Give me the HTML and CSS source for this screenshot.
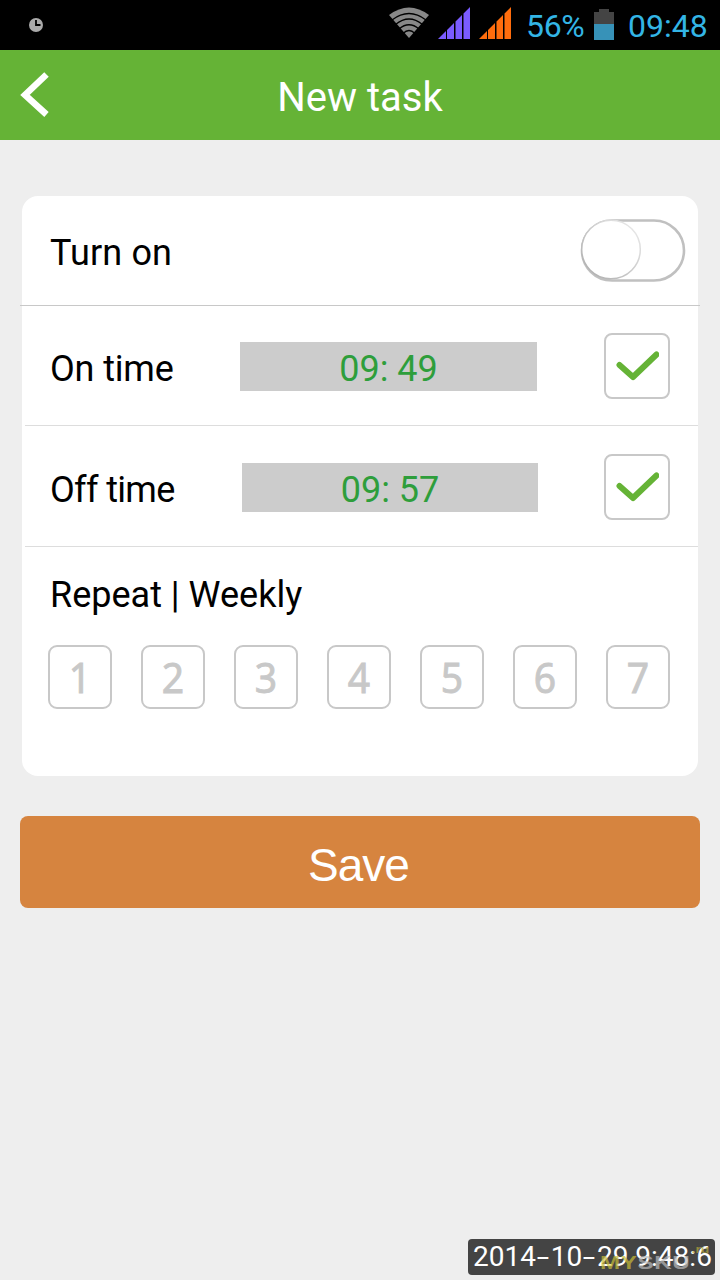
FILE: index.html
```html
<!DOCTYPE html>
<html lang="en">
<head>
<meta charset="utf-8">
<title>New task</title>
<link rel="stylesheet" href="styles.css">
</head>
<body>
<div class="status">
  <svg class="alarm" width="14" height="14" viewBox="0 0 14 14"><circle cx="7" cy="7" r="7" fill="#aaa"/><path d="M7 2v5h4.500" fill="none" stroke="#000" stroke-width="1.800"/></svg>
  <svg class="wifi" width="40" height="32" viewBox="0 0 40 32"><path d="M0 8Q20 -7 40 8L20 31Z" fill="#888"/><path d="M3 13Q20 0 37 13M6.500 17.500Q20 6.500 33.500 17.500M10 22Q20 13.500 30 22M14 26.500Q20 20.500 26 26.500" fill="none" stroke="#000" stroke-width="1.300"/></svg>
  <svg class="signal violet" width="32" height="32" viewBox="0 0 32 32"><path d="M0 32l8-8v8zM9 32v-9l7-7v16zM17.500 32V14.500L24 8v24zM25.500 32V6.500L32 0v32z"/></svg>
  <svg class="signal orange" width="32" height="32" viewBox="0 0 32 32"><path d="M0 32l8-8v8zM9 32v-9l7-7v16zM17.500 32V14.500L24 8v24zM25.500 32V6.500L32 0v32z"/></svg>
  <span class="percent">56%</span>
  <svg class="battery" width="20" height="31" viewBox="0 0 20 31"><path d="M0 3h5V0h10v3h5v12H0z" fill="#444"/><path d="M0 15h20v16H0z" fill="#3792b8"/></svg>
  <span class="clock">09:48</span>
</div>
<header class="header">
  <svg class="back" width="30" height="46" viewBox="0 0 30 46"><path d="M26.500 2.500L5 23L26.500 42.500" fill="none" stroke="#fff" stroke-width="6.500"/></svg>
  <h1 class="title">New task</h1>
</header>
<main class="content">
  <section class="card">
    <div class="row row-switch">
      <span class="label">Turn on</span>
      <svg class="switch" width="106" height="64" viewBox="0 0 106 64"><defs><linearGradient id="knob" x1="0" y1="1" x2="1" y2="0"><stop offset="0" stop-color="#aaa"/><stop offset=".5" stop-color="#ccc"/><stop offset="1" stop-color="#eee"/></linearGradient></defs><rect x="2" y="2.500" width="102" height="60" rx="30" fill="#fff" stroke="#c0c0c0" stroke-width="2.600"/><circle cx="31" cy="31.500" r="29.300" fill="#fff" stroke="url(#knob)" stroke-width="1.500"/></svg>
    </div>
    <div class="row row-on">
      <span class="label">On time</span>
      <span class="time">09: 49</span>
      <span class="check"><svg width="44" height="32" viewBox="0 0 44 32"><path d="M4.500 15L18 27L41.500 4.500" fill="none" stroke="#65b336" stroke-width="6" stroke-linecap="round" stroke-linejoin="round"/></svg></span>
    </div>
    <div class="row row-off">
      <span class="label">Off time</span>
      <span class="time">09: 57</span>
      <span class="check"><svg width="44" height="32" viewBox="0 0 44 32"><path d="M4.500 15L18 27L41.500 4.500" fill="none" stroke="#65b336" stroke-width="6" stroke-linecap="round" stroke-linejoin="round"/></svg></span>
    </div>
    <div class="repeat">
      <div class="label">Repeat | Weekly</div>
      <div class="days"><span class="day"><span>1</span></span><span class="day"><span>2</span></span><span class="day"><span>3</span></span><span class="day"><span>4</span></span><span class="day"><span>5</span></span><span class="day"><span>6</span></span><span class="day"><span>7</span></span></div>
    </div>
  </section>
  <div class="save">Save</div>
</main>
<div class="stamp"><span class="date">2014<span class="dash">-</span>10<span class="dash">-</span>29 9:48:6</span><span class="watermark"><b>MY</b>SKU<i>.ru</i></span></div>
</body>
</html>
```
FILE: styles.css
```css
* { box-sizing: border-box; }
body { margin: 0; width: 720px; height: 1280px; overflow: hidden; position: relative; background: #eee; color: #000; font-family: Roboto, sans-serif; }
svg { display: block; flex: none; }
.status { height: 50px; background: #000; display: flex; align-items: flex-start; color: #33b5e5; font-size: 32px; line-height: 38px; white-space: nowrap; }
.alarm { margin: 18px 0 0 29px; }
.wifi { margin: 7px 0 0 346px; }
.signal { margin: 7px 0 0 9px; }
.signal.orange { margin-left: 9px; }
.violet { fill: #7b5cff; }
.orange { fill: #ff6d0d; }
.percent { width: 68px; margin: 7px 0 0 15px; letter-spacing: -0.3px; }
.battery { margin-top: 9px; }
.clock { margin: 7px 0 0 14px; }
.header { height: 90px; background: #65b336; display: grid; grid-template-columns: 60px 1fr 60px; align-items: center; }
.back { margin-left: 20px; }
.title { margin: 6px 0 0; color: #fff; font-size: 40px; line-height: 48px; font-weight: 400; text-align: center; white-space: nowrap; }
.content { padding: 56px 20px 0; }
.card { margin: 0 2px; height: 580px; background: #fff; border-radius: 16px; }
.row { display: flex; align-items: center; }
.label { font-size: 36px; line-height: 44px; white-space: nowrap; }
.row-switch { height: 110px; margin: 0 -2px; padding: 3px 14px 0 30px; justify-content: space-between; border-bottom: 1px solid #c8c8c8; }
.row-switch .label { padding-top: 2px; letter-spacing: 0.15px; }
.switch { margin-top: -5px; }
.row-on, .row-off { margin-left: 3px; padding: 0 28px 0 25px; border-bottom: 1px solid #ddd; }
.row-on { height: 120px; }
.row-off { height: 121px; }
.row .label { flex: none; }
.row-on .label { width: 190px; padding-top: 6px; letter-spacing: -0.15px; }
.row-off .label { width: 192px; padding-top: 8px; letter-spacing: -0.65px; }
.time { width: 297px; height: 49px; padding-top: 5px; background: #ccc; color: #2e9e3b; font-size: 36px; line-height: 44px; text-align: center; margin-top: 2px; }
.row-off .time { width: 296px; }
.check { width: 66px; height: 66px; margin-left: auto; border: 2px solid #c8c8c8; border-radius: 8px; display: flex; align-items: center; justify-content: center; }
.row-off .check { margin-top: 2px; }
.repeat { padding: 26px 28px 0 26px; }
.repeat .label { padding-left: 2px; }
.days { display: flex; justify-content: space-between; margin-top: 28px; }
.day { width: 64px; height: 64px; border: 2px solid #c8c8c8; border-radius: 9px; color: #c8c8c8; font: 400 42px/60px "Noto Sans", sans-serif; -webkit-text-stroke: 0.9px #c8c8c8; text-align: center; }
.day span { display: inline-block; transform: scaleX(0.93); }
.save { margin-top: 40px; height: 92px; border-radius: 8px; background: #d6843f; color: #fff; font-family: "Liberation Sans", sans-serif; font-size: 46px; line-height: 98px; letter-spacing: -1px; text-align: center; padding-right: 3px; }
.stamp { position: absolute; left: 468px; top: 1239px; width: 247px; height: 36px; border-radius: 4px; background: #444; color: #fff; }
.date { position: absolute; left: 5px; top: 0; font-size: 28px; line-height: 36px; white-space: nowrap; }
.dash { display: inline-block; margin: 0 4px 0 3px; transform: scaleX(1.6); }
.watermark { position: absolute; left: 132px; top: 13px; color: #bbb; opacity: .7; font: 700 19px/22px "Liberation Sans", sans-serif; letter-spacing: 0.5px; white-space: nowrap; transform: scaleX(1.27); transform-origin: left; }
.watermark b { color: #c8bc38; }
.watermark i { position: absolute; right: -15px; top: -11px; color: #b5a83c; font-size: 11px; font-style: normal; line-height: 16px; letter-spacing: 0; }
```
